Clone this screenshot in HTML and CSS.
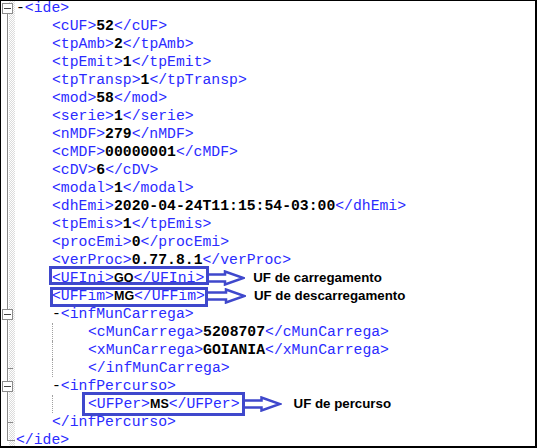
FILE: index.html
```html
<!DOCTYPE html>
<html lang="pt-BR">
<head>
    <meta charset="UTF-8">
    <title>MDF-e - ide</title>
    <link rel="stylesheet" href="styles.css">
</head>
<body>

    <div class="frame">
        <div class="tree">
            <div class="row"><span class="gut top"><i class="fold"></i></span><span class="code"><span class="dash">-</span>&lt;ide&gt;</span></div>
            <div class="row"><span class="gut"></span><span class="code in1">&lt;cUF&gt;<b>52</b>&lt;/cUF&gt;</span></div>
            <div class="row"><span class="gut"></span><span class="code in1">&lt;tpAmb&gt;<b>2</b>&lt;/tpAmb&gt;</span></div>
            <div class="row"><span class="gut"></span><span class="code in1">&lt;tpEmit&gt;<b>1</b>&lt;/tpEmit&gt;</span></div>
            <div class="row"><span class="gut"></span><span class="code in1">&lt;tpTransp&gt;<b>1</b>&lt;/tpTransp&gt;</span></div>
            <div class="row"><span class="gut"></span><span class="code in1">&lt;mod&gt;<b>58</b>&lt;/mod&gt;</span></div>
            <div class="row"><span class="gut"></span><span class="code in1">&lt;serie&gt;<b>1</b>&lt;/serie&gt;</span></div>
            <div class="row"><span class="gut"></span><span class="code in1">&lt;nMDF&gt;<b>279</b>&lt;/nMDF&gt;</span></div>
            <div class="row"><span class="gut"></span><span class="code in1">&lt;cMDF&gt;<b>00000001</b>&lt;/cMDF&gt;</span></div>
            <div class="row"><span class="gut"></span><span class="code in1">&lt;cDV&gt;<b>6</b>&lt;/cDV&gt;</span></div>
            <div class="row"><span class="gut"></span><span class="code in1">&lt;modal&gt;<b>1</b>&lt;/modal&gt;</span></div>
            <div class="row"><span class="gut"></span><span class="code in1">&lt;dhEmi&gt;<b>2020-04-24T11:15:54-03:00</b>&lt;/dhEmi&gt;</span></div>
            <div class="row"><span class="gut"></span><span class="code in1">&lt;tpEmis&gt;<b>1</b>&lt;/tpEmis&gt;</span></div>
            <div class="row"><span class="gut"></span><span class="code in1">&lt;procEmi&gt;<b>0</b>&lt;/procEmi&gt;</span></div>
            <div class="row"><span class="gut"></span><span class="code in1">&lt;verProc&gt;<b>0.77.8.1</b>&lt;/verProc&gt;</span></div>

            <!-- annotated rows -->
            <div class="row">
                <span class="gut"></span>
                <span class="code in1"><span class="hl">&lt;UFIni&gt;<b class="sans">GO</b>&lt;/UFIni&gt;</span></span>
                <svg class="arrow" width="38" height="16" viewBox="0 0 38 16"><path d="M0 4.5H18V1.5L36.5 8L18 14.5V11.5H0"/></svg>
                <span class="note">UF de carregamento</span>
            </div>
            <div class="row">
                <span class="gut"></span>
                <span class="code in1"><span class="hl low">&lt;UFFim&gt;<b class="sans">MG</b>&lt;/UFFim&gt;</span></span>
                <svg class="arrow" width="38" height="16" viewBox="0 0 38 16"><path d="M0 4.5H18V1.5L36.5 8L18 14.5V11.5H0"/></svg>
                <span class="note">UF de descarregamento</span>
            </div>

            <div class="row"><span class="gut"><i class="fold"></i></span><span class="code in1"><span class="dash">-</span>&lt;infMunCarrega&gt;</span></div>
            <div class="row"><span class="gut"></span><span class="code in2"><span class="guide">&lt;cMunCarrega&gt;<b>5208707</b>&lt;/cMunCarrega&gt;</span></span></div>
            <div class="row"><span class="gut"></span><span class="code in2"><span class="guide">&lt;xMunCarrega&gt;<b>GOIANIA</b>&lt;/xMunCarrega&gt;</span></span></div>
            <div class="row"><span class="gut tick"></span><span class="code in2"><span class="guide">&lt;/infMunCarrega&gt;</span></span></div>

            <div class="row"><span class="gut"><i class="fold"></i></span><span class="code in1"><span class="dash">-</span>&lt;infPercurso&gt;</span></div>
            <div class="row">
                <span class="gut"></span>
                <span class="code in2"><span class="guide"><span class="hl wide">&lt;UFPer&gt;<b class="sans">MS</b>&lt;/UFPer&gt;</span></span></span>
                <svg class="arrow" width="39" height="16" viewBox="0 0 38 16"><path d="M0 4.5H18V1.5L36.5 8L18 14.5V11.5H0"/></svg>
                <span class="note far">UF de percurso</span>
            </div>
            <div class="row"><span class="gut tick"></span><span class="code in1">&lt;/infPercurso&gt;</span></div>
            <div class="row"><span class="gut end"></span><span class="code">&lt;/ide&gt;</span></div>
        </div>
    </div>

</body>
</html>
```

FILE: styles.css
```css
* {
    margin: 0;
    padding: 0;
    box-sizing: border-box;
}

body {
    background-color: #fff;
}

.frame {
    width: 537px;
    height: 448px;
    border: 1px solid #000;
    border-right-width: 2px;
    border-bottom-width: 2px;
    overflow: hidden;
}

.tree {
    margin-top: -2px;
    font-family: "Liberation Mono", "Courier New", monospace;
    font-size: 14.75px;
    line-height: 18px;
    color: #2b2bff;
}

.row {
    display: flex;
    align-items: center;
    height: 18px;
}

/* left gutter: tree line, fold boxes, dotted strip */
.gut {
    flex: none;
    width: 14px;
    height: 18px;
    display: flex;
    align-items: center;
    padding-left: 1px;
    background:
        linear-gradient(#8a8a8a, #8a8a8a) 6px 0 / 1px 100% no-repeat,
        linear-gradient(#fff, #fff) 0 0 / 8px 100% no-repeat,
        repeating-conic-gradient(#dcdcdc 0 25%, #fff 0 50%) 0 0 / 2px 2px;
}

.gut.top {
    background:
        linear-gradient(#8a8a8a, #8a8a8a) 6px 100% / 1px 50% no-repeat,
        linear-gradient(#fff, #fff) 0 0 / 8px 100% no-repeat,
        repeating-conic-gradient(#dcdcdc 0 25%, #fff 0 50%) 0 0 / 2px 2px;
}

.gut.tick {
    background:
        linear-gradient(#8a8a8a, #8a8a8a) 6px 9px / 6px 1px no-repeat,
        linear-gradient(#8a8a8a, #8a8a8a) 6px 0 / 1px 100% no-repeat,
        linear-gradient(#fff, #fff) 0 0 / 8px 100% no-repeat,
        repeating-conic-gradient(#dcdcdc 0 25%, #fff 0 50%) 0 0 / 2px 2px;
}

.gut.end {
    background:
        linear-gradient(#8a8a8a, #8a8a8a) 6px 9px / 8px 1px no-repeat,
        linear-gradient(#8a8a8a, #8a8a8a) 6px 0 / 1px 10px no-repeat,
        linear-gradient(#fff, #fff) 0 0 / 8px 100% no-repeat,
        repeating-conic-gradient(#dcdcdc 0 25%, #fff 0 50%) 0 0 / 2px 2px;
}

.fold {
    display: block;
    width: 11px;
    height: 11px;
    border: 1px solid #8c8c8c;
    background: #fff linear-gradient(#444, #444) center / 7px 1px no-repeat;
}

.code {
    white-space: pre;
    padding-left: 1px;
}

.in1,
.in2 {
    padding-left: 37px;
}

.guide {
    display: inline-block;
    border-left: 1px dotted #a0a0a0;
    padding-left: 35px;
}

.dash {
    color: #000;
}

b {
    color: #000;
}

.sans {
    font-family: "Liberation Sans", Arial, sans-serif;
    font-size: 12.5px;
}

/* hand-drawn highlight boxes */
.hl {
    position: relative;
    display: inline-block;
}

.hl::before {
    content: "";
    position: absolute;
    top: -3px;
    bottom: 2px;
    left: -3px;
    right: -5px;
    border: 3px solid #3f48cc;
}

.hl.low::before {
    top: 0;
    bottom: -2px;
    left: -2px;
    right: -3px;
}

.hl.wide::before {
    top: -3px;
    bottom: -3px;
    left: -6px;
    right: -5px;
}

.arrow {
    flex: none;
    margin-left: 3px;
    fill: #fff;
    stroke: #3f48cc;
    stroke-width: 2.5;
}

.note {
    margin-left: 8px;
    font-family: "Liberation Sans", Arial, sans-serif;
    font-size: 13.3px;
    font-weight: bold;
    color: #000;
}

.note.far {
    margin-left: 12px;
}
```
